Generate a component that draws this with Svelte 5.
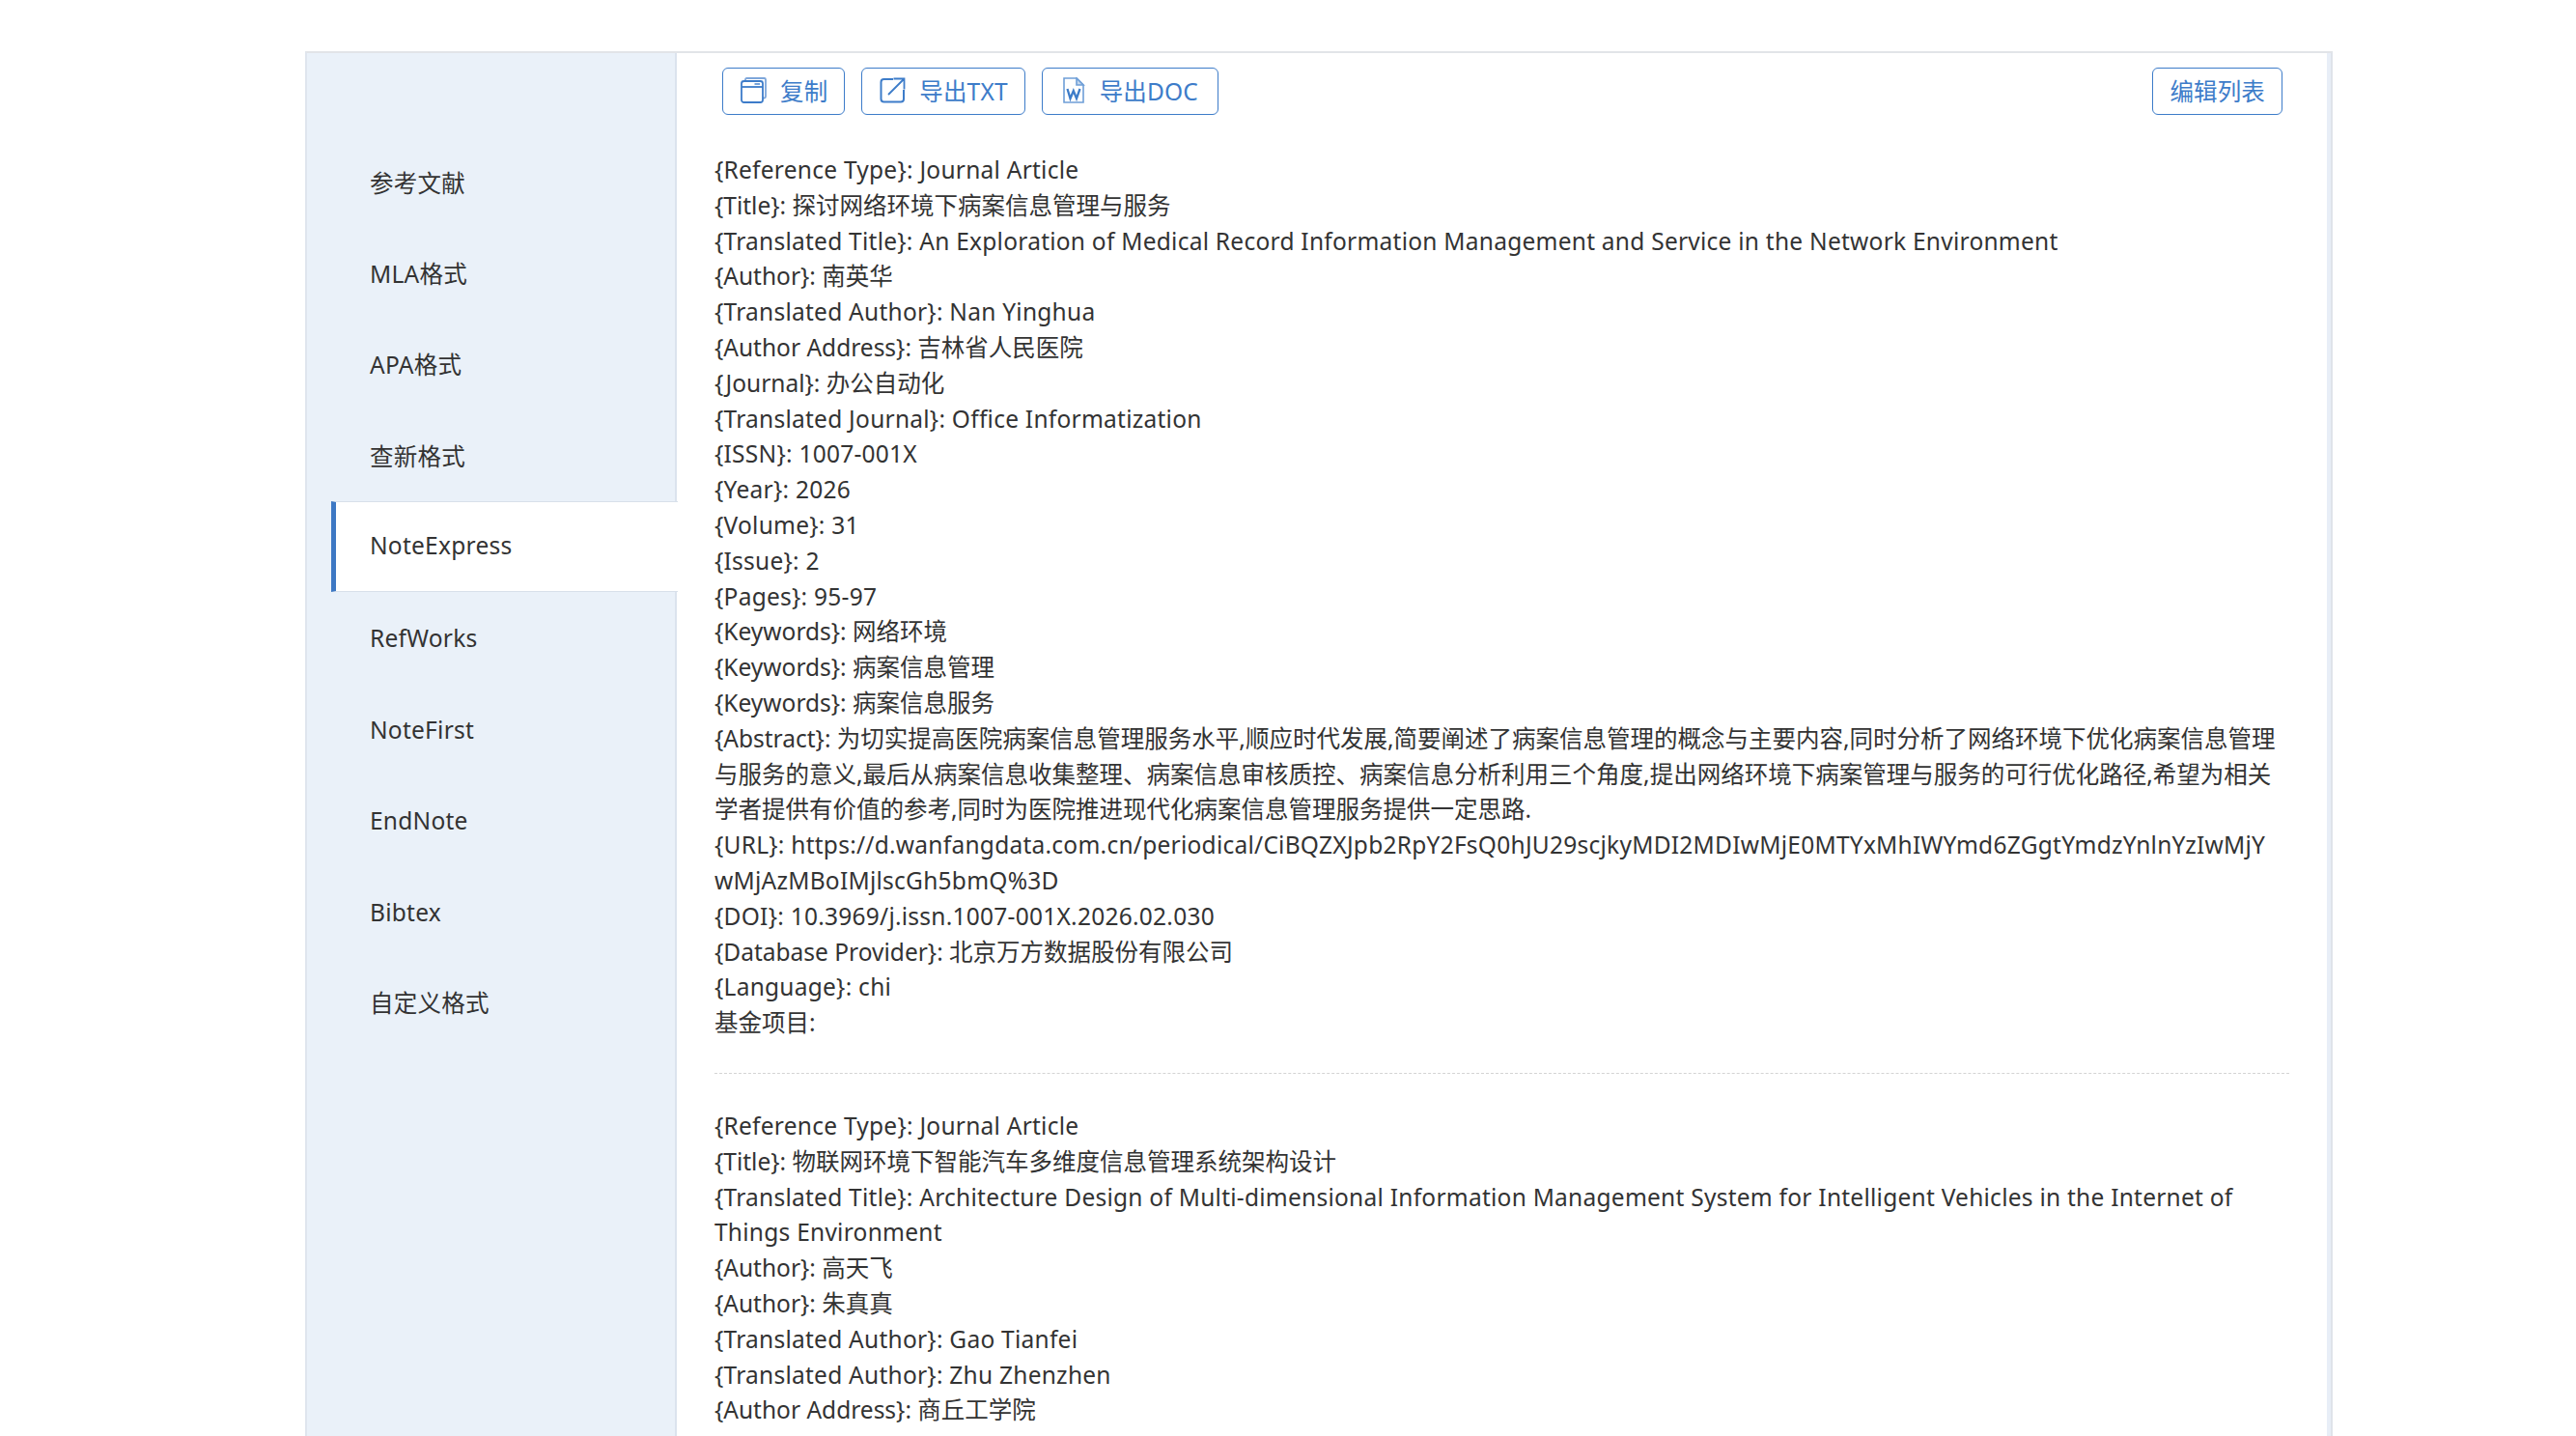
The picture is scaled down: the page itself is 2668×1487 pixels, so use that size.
<script>
  const navItems = ['参考文献','MLA格式','APA格式','查新格式','NoteExpress','RefWorks','NoteFirst','EndNote','Bibtex','自定义格式'];
  const first = [
    '{Reference Type}: Journal Article',
    '{Title}: 探讨网络环境下病案信息管理与服务',
    '{Translated Title}: An Exploration of Medical Record Information Management and Service in the Network Environment',
    '{Author}: 南英华',
    '{Translated Author}: Nan Yinghua',
    '{Author Address}: 吉林省人民医院',
    '{Journal}: 办公自动化',
    '{Translated Journal}: Office Informatization',
    '{ISSN}: 1007-001X',
    '{Year}: 2026',
    '{Volume}: 31',
    '{Issue}: 2',
    '{Pages}: 95-97',
    '{Keywords}: 网络环境',
    '{Keywords}: 病案信息管理',
    '{Keywords}: 病案信息服务',
    '{Abstract}: 为切实提高医院病案信息管理服务水平,顺应时代发展,简要阐述了病案信息管理的概念与主要内容,同时分析了网络环境下优化病案信息管理',
    '与服务的意义,最后从病案信息收集整理、病案信息审核质控、病案信息分析利用三个角度,提出网络环境下病案管理与服务的可行优化路径,希望为相关',
    '学者提供有价值的参考,同时为医院推进现代化病案信息管理服务提供一定思路.',
    '{URL}: https://d.wanfangdata.com.cn/periodical/CiBQZXJpb2RpY2FsQ0hJU29scjkyMDI2MDIwMjE0MTYxMhIWYmd6ZGgtYmdzYnlnYzIwMjY',
    'wMjAzMBoIMjlscGh5bmQ%3D',
    '{DOI}: 10.3969/j.issn.1007-001X.2026.02.030',
    '{Database Provider}: 北京万方数据股份有限公司',
    '{Language}: chi',
    '基金项目:'
  ];
  const second = [
    '{Reference Type}: Journal Article',
    '{Title}: 物联网环境下智能汽车多维度信息管理系统架构设计',
    '{Translated Title}: Architecture Design of Multi-dimensional Information Management System for Intelligent Vehicles in the Internet of',
    'Things Environment',
    '{Author}: 高天飞',
    '{Author}: 朱真真',
    '{Translated Author}: Gao Tianfei',
    '{Translated Author}: Zhu Zhenzhen',
    '{Author Address}: 商丘工学院'
  ];
  const isCjk = (s) => /[\u4e00-\u9fff]/.test(s);
</script>

<div class="page">
  <div class="panel">
    <nav class="side">
      {#each navItems as item, i}
        <div class="nav-item" class:active={i === 4}>{item}</div>
      {/each}
    </nav>
    <main class="content">
      <div class="toolbar">
        <div class="group">
          <button class="btn">
            <svg viewBox="0 0 27 27" fill="none" stroke="currentColor" stroke-width="1.800"><path d="M5 4V2.500Q5 1 6.500 1H24.500Q26 1 26 2.500V20Q26 21.500 24.500 21.500H23" stroke="#7ea6da"/><rect x="1" y="4" width="22" height="22" rx="2.500"/><path d="M1 10H23"/><path d="M14.500 7H20" stroke-width="1.400"/></svg>
            <span>复制</span>
          </button>
          <button class="btn">
            <svg viewBox="0 0 27 27" fill="none" stroke="currentColor" stroke-width="2"><path d="M14 2H4.500Q1.500 2 1.500 5V22.500Q1.500 25.500 4.500 25.500H22Q25 25.500 25 22.500V13"/><path d="M9 18L25 2M14.500 1.500H25.500V12.500" stroke-width="1.800"/></svg>
            <span>导出TXT</span>
          </button>
          <button class="btn doc">
            <svg viewBox="0 0 27 27" fill="none" stroke="#6f9fd8" stroke-width="1.600"><path d="M4 1H17L24 8V26H4Z"/><path d="M17 1V8H24Z" fill="#c5d8ee"/><path d="M7.500 12L10.500 22L13.800 14L17 22L20.500 12" stroke="#3d7cc9" stroke-width="2.300"/></svg>
            <span>导出DOC</span>
          </button>
        </div>
        <button class="btn edit">编辑列表</button>
      </div>
      <div class="record sep">
        {#each first as line}<div class="line" class:latin={!isCjk(line)}>{line}</div>{/each}
      </div>
      <div class="record">
        {#each second as line}<div class="line" class:latin={!isCjk(line)}>{line}</div>{/each}
      </div>
    </main>
    <div class="strip"></div>
  </div>
</div>

<style>
  :global(body) { margin: 0; overflow: hidden; background: #fff; }
  .page { height: 1487px; padding: 53px 252px 0 316px; box-sizing: border-box; overflow: hidden; font-family: "Noto Sans", "Noto Sans CJK SC", sans-serif; color: #333; }
  .panel { display: flex; height: 1434px; border-top: 2px solid #e2e4e8; border-left: 2px solid #dfe5ee; border-right: 2px solid #dfe3ea; box-sizing: border-box; overflow: hidden; }
  .side { width: 383px; flex: none; background: #eaf1f9; border-right: 2px solid #dbe3ee; padding: 86.500px 0 0 25px; box-sizing: border-box; }
  .nav-item { height: 94.400px; line-height: 96px; padding-left: 40px; font-size: 24.500px; letter-spacing: 0.250px; white-space: nowrap; }
  .nav-item.active { background: #fff; border-left: 5px solid #3d78c4; border-top: 1px solid #d8e0ea; border-bottom: 1px solid #d8e0ea; padding-left: 35px; margin-right: -3px; position: relative; line-height: 90px; box-sizing: border-box; }
  .content { flex: 1; min-width: 0; padding: 15px 39px 0 39px; }
  .toolbar { display: flex; justify-content: space-between; padding: 0 7px 0 8px; }
  .group { display: flex; gap: 17px; }
  .btn { height: 49px; display: flex; align-items: center; gap: 14px; padding: 0 17px 2px 18px; background: #fff; border: 1.500px solid #3d7cc9; border-radius: 6px; color: #3d7cc9; font-family: inherit; font-size: 24.500px; letter-spacing: 0.150px; white-space: nowrap; }
  .btn svg { flex: none; width: 27px; height: 27px; }
  .doc { padding-right: 20px; }
  .edit { padding: 0 17px 2px; }
  .record { padding-top: 39px; font-size: 24.500px; line-height: 36.800px; letter-spacing: 0; }
  .sep { padding-bottom: 33px; border-bottom: 1px dashed #d4d4d4; }
  .record + .record { padding-top: 36px; }
  .line { white-space: nowrap; }
  .latin { letter-spacing: 0.250px; }
  .strip { width: 4px; flex: none; background: #e8eef7; }
</style>
